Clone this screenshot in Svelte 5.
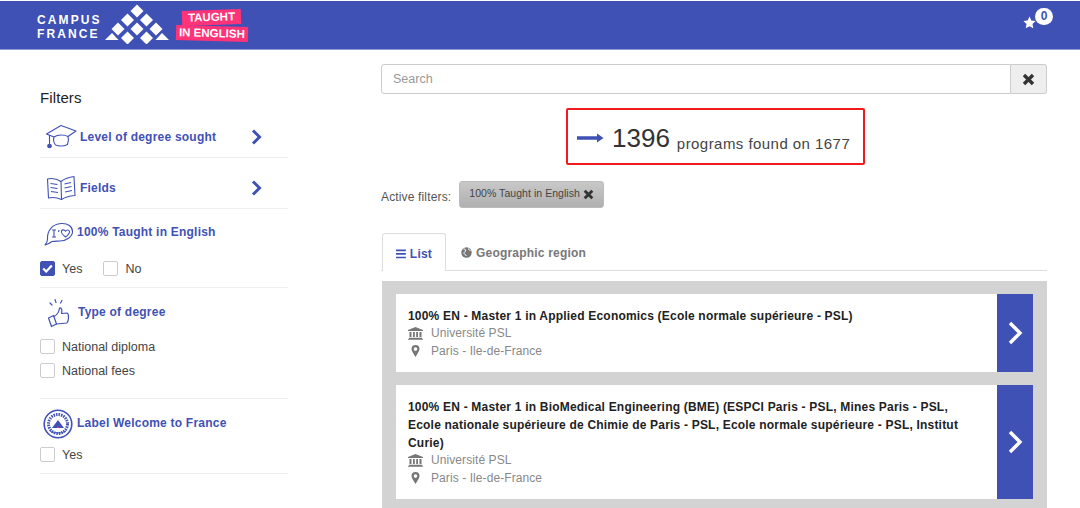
<script>
  const cards = [
    { title: '100% EN - Master 1 in Applied Economics (Ecole normale supérieure - PSL)', h: 'one' },
    { title: '100% EN - Master 1 in BioMedical Engineering (BME) (ESPCI Paris - PSL, Mines Paris - PSL, Ecole nationale supérieure de Chimie de Paris - PSL, Ecole normale supérieure - PSL, Institut Curie)', h: 'three' }
  ];
  const diamonds = [[32,7],[22.5,16],[41.5,16],[13,25],[32,25],[51,25],[22.5,34],[41.5,34]];
</script>

<div class="page">
  <header class="top">
    <div class="brand">
      <div class="wordmark"><span>CAMPUS</span><span>FRANCE</span></div>
      <svg class="pyramid" width="64" height="40" viewBox="0 0 64 40" fill="#fff">
        {#each diamonds as d}
          <path d="M{d[0]} {d[1]-6.500}l6.500 6.500-6.500 6.500-6.500-6.500z"/>
        {/each}
        <path d="M7 29l6.500 7H0z"/>
        <path d="M57 29l7 7H50.500z"/>
      </svg>
      <div class="taught">
        <span class="t1">TAUGHT</span>
        <span class="t2">IN ENGLISH</span>
      </div>
    </div>
    <div class="fav">
      <svg width="13" height="13" viewBox="0 0 24 24" fill="#fff"><path d="M12 1l3.400 7.300 7.900 1-5.800 5.500 1.500 7.900L12 18.800l-7 3.900 1.500-7.900L.7 9.300l7.900-1z"/></svg>
      <span class="count">0</span>
    </div>
  </header>

  <div class="content">
    <aside class="side">
      <h2>Filters</h2>

      <div class="row r1">
        <svg class="ic" width="32" height="26" viewBox="0 0 32 26" fill="none" stroke="#3f51b5" stroke-width="1.100" stroke-linejoin="round">
          <path d="M1.500 10L16 1.500 31 7 23 12.500C19 10.500 13 10.500 9 13z"/>
          <path d="M9 13c-1 3 0 6 1.500 8 4 1.500 9 1 12-.5 1-2.500 1.500-5 .5-8"/>
          <path d="M4.500 11v9"/>
          <circle cx="4.500" cy="22" r="1.800" fill="#3f51b5"/>
        </svg>
        <span class="lab l1">Level of degree sought</span>
        <svg class="chev" width="11" height="16" viewBox="0 0 11 16" fill="none" stroke="#3f51b5" stroke-width="3"><path d="M2 1.500L8.500 8 2 14.500"/></svg>
      </div>

      <div class="row r2">
        <svg class="ic" width="30" height="26" viewBox="0 0 30 26" fill="none" stroke="#3f51b5" stroke-width="1.100" stroke-linejoin="round">
          <path d="M1.500 4C6 3 11 4 15 6.500 19 3.500 24 2 28 1.500l1 19c-5 .5-10 1.500-13.500 4C11 22.500 6.500 22 2.500 23z"/>
          <path d="M15 6.500l.5 18"/>
          <path d="M4.500 8.500l7 1M4.500 12.500l7 1M5 16.500l7 1M18.500 9l6.500-1.500M18.500 13l7-1.500M19 17l7-1.500"/>
        </svg>
        <span class="lab l2">Fields</span>
        <svg class="chev" width="11" height="16" viewBox="0 0 11 16" fill="none" stroke="#3f51b5" stroke-width="3"><path d="M2 1.500L8.500 8 2 14.500"/></svg>
      </div>

      <div class="group g3">
        <div class="ghead">
          <svg class="ic3" width="30" height="24" viewBox="0 0 30 24" fill="none" stroke="#3f51b5" stroke-width="1.100" stroke-linejoin="round">
            <path d="M1 23c2-2 2.500-3.500 2.500-6C3 8 9 2 17 1.500c7-.5 11.500 3 11.500 8S23 18.500 16 19c-3 .2-5.500 0-8 .5-2 1.500-4 3-7 3.500z"/>
            <path d="M8 8h4M10 8v7M8 15h4M15 8l-.5 2"/>
            <path d="M21.500 15c-2-1.500-4.500-4-4-6 .5-1.500 3-1.500 4 .3 1-1.800 3.500-1.800 4 0 .3 2-2 4.200-4 5.700z"/>
          </svg>
          <span class="lab">100% Taught in English</span>
        </div>
        <div class="checks inline">
          <label class="chk"><span class="box on"><svg width="11" height="9" viewBox="0 0 11 9" fill="none" stroke="#fff" stroke-width="2.200"><path d="M1.200 4.500l3 3L9.800 1.500"/></svg></span>Yes</label>
          <label class="chk"><span class="box"></span>No</label>
        </div>
      </div>

      <div class="group g4">
        <div class="ghead">
          <svg class="ic4" width="24" height="30" viewBox="0 0 24 30" fill="none" stroke="#3f51b5" stroke-width="1.200" stroke-linejoin="round" stroke-linecap="round">
            <path d="M3 5l2 2M8 1.500l1 3M15 2.500l-1.500 2.500"/>
            <path d="M1.500 20l5-2.500 3 8.500-5 2.500z"/>
            <path d="M7 18.500c3-1.500 5-4 5.500-8.500 2-.5 3 2 2 5.500l5.500-.5c2 .5 2 7.500 0 10l-10.500 1"/>
          </svg>
          <span class="lab">Type of degree</span>
        </div>
        <div class="checks">
          <label class="chk"><span class="box"></span>National diploma</label>
          <label class="chk"><span class="box"></span>National fees</label>
        </div>
      </div>

      <div class="group g5">
        <div class="ghead">
          <svg class="ic5" width="30" height="30" viewBox="0 0 30 30" fill="none" stroke="#3f51b5">
            <circle cx="15" cy="15" r="13.800" stroke-width="1.600"/>
            <circle cx="15" cy="15" r="9.500" stroke-width="3" stroke-dasharray="1.500 1"/>
            <path d="M9 19l6-8 6 8z" fill="#3f51b5" stroke="none"/>
            <path d="M14 19l1-2 1 2z" fill="#ff3377" stroke="none"/>
            <path d="M7 22c4 2.500 12 2.500 16 0" stroke-width="1"/>
          </svg>
          <span class="lab">Label Welcome to France</span>
        </div>
        <div class="checks">
          <label class="chk"><span class="box"></span>Yes</label>
        </div>
      </div>
    </aside>

    <main class="main">
      <div class="search">
        <div class="input">Search</div>
        <div class="go"><svg width="13" height="13" viewBox="0 0 13 13" fill="none" stroke="#333" stroke-width="3.400"><path d="M2 2l9 9M11 2l-9 9"/></svg></div>
      </div>

      <div class="resultwrap">
        <div class="result">
          <svg width="27" height="12" viewBox="0 0 27 12" fill="#3f51b5"><path d="M0 4.300h20V1.500L26.500 6 20 10.500V7.700H0z"/></svg>
          <span class="big">1396</span>
          <span class="small">programs found on 1677</span>
        </div>
      </div>

      <div class="active">
        <span class="alab">Active filters:</span>
        <span class="chip"><span class="chiptxt">100% Taught in English</span>
          <svg width="11" height="11" viewBox="0 0 13 13" fill="none" stroke="#333" stroke-width="3.400"><path d="M2 2l9 9M11 2l-9 9"/></svg>
        </span>
      </div>

      <div class="tabs">
        <div class="tab on">
          <svg width="11" height="10" viewBox="0 0 11 10" fill="#3f51b5"><path d="M0 0h11v1.800H0zM0 4h11v1.800H0zM0 8h11v1.800H0z"/></svg>
          List
        </div>
        <div class="tab">
          <svg width="11" height="11" viewBox="0 0 11 11"><circle cx="5.500" cy="5.500" r="5.200" fill="#777"/><path d="M2.500 2c1.500 0 2.500.5 2 2S2.500 5 3 6.500 5.500 7 5 9M7.500 1.500c0 1.500.5 1.500 2 2" stroke="#fff" stroke-width="1" fill="none"/></svg>
          Geographic region
        </div>
      </div>

      <div class="list">
        {#each cards as c}
          <article class="card {c.h}">
            <div class="body">
              <div class="title">{c.title}</div>
              <div class="meta">
                <svg width="15" height="13" viewBox="0 0 15 13" fill="#777"><path d="M7.500 0L15 3v1H0V3zM1.500 5h2v5h-2zM5 5h1.800v5H5zM8.200 5H10v5H8.200zM11.500 5h2v5h-2zM.8 10.700h13.400V12H.8zM0 12.200h15V13H0z"/></svg>
                <span>Université PSL</span>
              </div>
              <div class="meta">
                <svg width="15" height="12" viewBox="0 0 15 12"><path fill="#777" fill-rule="evenodd" d="M7.500 0a4 4 0 0 1 4 4c0 2-2.500 5.500-4 8-1.500-2.500-4-6-4-8a4 4 0 0 1 4-4zm0 2.300a1.800 1.800 0 1 0 0 3.600 1.800 1.800 0 0 0 0-3.600z"/></svg>
                <span>Paris - Ile-de-France</span>
              </div>
            </div>
            <div class="arrow">
              <svg width="17" height="24" viewBox="0 0 17 24" fill="none" stroke="#fff" stroke-width="3.400"><path d="M3 2l10 10L3 22"/></svg>
            </div>
          </article>
        {/each}
      </div>
    </main>
  </div>
</div>

<style>
  :global(body) { margin: 0; background: #fff; }
  .page {
    width: 1080px; height: 508px; overflow: hidden;
    font-family: "Liberation Sans", Arial, sans-serif; color: #333;
  }
  .top {
    height: 48px; margin-top: 1px; background: #3f51b5;
    display: flex; justify-content: space-between; align-items: center;
    border-bottom: 1px solid #8d98d4;
    box-sizing: content-box;
  }
  .brand { display: flex; align-items: center; margin-left: 37px; }
  .wordmark {
    display: flex; flex-direction: column; color: #fff;
    font-weight: 700; font-size: 12px; line-height: 14px; letter-spacing: 2.100px;
    width: 68px; margin-top: 4px;
  }
  .pyramid { margin-top: -2px; }
  .taught {
    display: flex; flex-direction: column; align-items: flex-start;
    margin-left: 7px; color: #fff; font-weight: 700;
  }
  .t1 {
    background: #ff3377; font-size: 11.500px; line-height: 15px; padding: 0 6px;
    margin-left: 6px; transform: rotate(-2deg);
  }
  .t2 {
    background: #ff3377; font-size: 11.500px; line-height: 15px; padding: 0 3px;
    margin-top: 1px; transform: rotate(1.500deg);
  }
  .fav { display: flex; align-items: flex-start; margin-right: 27px; height: 26px; width: 30px; margin-top: -6px; }
  .fav svg { margin-top: 7px; flex: none; }
  .count {
    width: 19px; height: 17px; border-radius: 9px; background: #fff; color: #3f51b5;
    font-size: 12px; font-weight: 700; line-height: 17px; text-align: center; margin-left: -1px; margin-top: -1px;
  }
  .content { display: flex; padding-left: 40px; }
  .side { width: 248px; flex: none; font-size: 13px; }
  h2 { margin: 39px 0 0; font-size: 15px; line-height: 17px; font-weight: 400; color: #222; height: 18px; letter-spacing: .1px; }
  .row { display: flex; align-items: center; border-bottom: 1px solid #eee; padding-left: 5px; }
  .r1 { height: 40px; padding-top: 9px; margin-top: 1px; }
  .r2 { height: 40px; padding-top: 10px; }
  .ic { flex: none; width: 32px; margin-right: 3px; }
  .r2 .ic { margin-left: 1px; margin-right: 4px; width: 30px; }
  .lab { font-weight: 700; font-size: 12px; color: #3f51b5; letter-spacing: .22px; white-space: nowrap; }
  .chev { margin-left: auto; margin-right: 26px; }
  .group { border-bottom: 1px solid #eee; }
  .ghead { display: flex; align-items: center; }
  .g3 { height: 78px; }
  .g3 .ghead { height: 46px; padding-left: 4px; }
  .ic3 { margin-right: 3px; margin-top: 3px; }
  .g4 { height: 110px; }
  .g4 .ghead { height: 48px; padding-left: 7px; }
  .ic4 { margin-right: 7px; margin-top: 2px; }
  .g5 { height: 74px; }
  .g5 .ghead { height: 48px; padding-left: 3px; }
  .ic5 { margin-right: 4px; margin-top: 2px; }
  .checks { display: flex; flex-direction: column; gap: 9px; font-size: 12.500px; color: #444; }
  .checks.inline { flex-direction: row; gap: 21px; margin-top: 6px; }
  .g4 .checks { margin-top: 3px; }
  .g5 .checks { margin-top: 0; }
  .chk { display: flex; align-items: center; gap: 7px; height: 15px; }
  .box {
    width: 13px; height: 13px; border: 1px solid #ccc; border-radius: 2px; background: #fff;
    display: flex; align-items: center; justify-content: center;
  }
  .box.on { background: #3f51b5; border-color: #3f51b5; }

  .main { width: 666px; margin-left: 93px; flex: none; }
  .search { display: flex; height: 30px; margin-top: 14px; }
  .input {
    flex: 1; border: 1px solid #ccc; border-radius: 3px 0 0 3px; box-sizing: border-box;
    color: #999; font-size: 12.500px; line-height: 28px; padding-left: 11px;
  }
  .go {
    width: 36px; box-sizing: border-box; border: 1px solid #ccc; border-left: 0; border-radius: 0 3px 3px 0;
    background: #eee; display: flex; align-items: center; justify-content: center;
  }
  .resultwrap { display: flex; padding-left: 185px; margin-top: 14px; }
  .result {
    width: 299px; height: 57px; box-sizing: border-box; border: 2px solid #f21b1b; border-radius: 2px;
    display: flex; align-items: center; padding: 3px 0 0 9px;
  }
  .big { font-size: 26px; margin-left: 8px; color: #333; }
  .small { font-size: 15px; margin-left: 7px; margin-top: 10px; color: #444; letter-spacing: .45px; white-space: nowrap; }
  .active { display: flex; align-items: center; margin-top: 16px; height: 27px; }
  .alab { font-size: 12px; color: #555; margin-top: 5px; letter-spacing: .15px; }
  .chip {
    margin-left: 8px; width: 145px; height: 27px; box-sizing: border-box;
    background: linear-gradient(#c8c8c8, #b0b0b0); border: 1px solid #bbb; border-radius: 3px;
    font-size: 10.500px; color: #444; display: flex; align-items: center; gap: 3px; padding-left: 9px; white-space: nowrap;
  }
  .chiptxt { margin-top: -3px; letter-spacing: .05px; }
  .chip svg { margin-top: -1px; }
  .tabs { display: flex; margin-top: 25px; height: 37px; border-bottom: 1px solid #ddd; font-size: 12px; font-weight: 700; color: #777; letter-spacing: .2px; }
  .tab { display: flex; align-items: center; gap: 4px; padding: 2px 15px 0; height: 37px; box-sizing: border-box; }
  .tab:first-child { margin-left: 1px; padding: 2px 13px 0; }
  .tab.on {
    color: #3f51b5; background: #fff; border: 1px solid #ddd; border-bottom: 0;
    border-radius: 3px 3px 0 0; height: 38px; width: 64px;
  }
  .list {
    margin: 10px 0 0 1px; background: #d3d3d3; padding: 13px 14px; display: flex; flex-direction: column; gap: 13px; height: 300px;
  }
  .card { display: flex; background: #fff; flex: none; }
  .one { height: 78px; }
  .three { height: 114px; }
  .body { flex: 1; padding: 13px 34px 0 13px; margin-left: -1px; }
  .title { font-size: 12px; line-height: 18px; font-weight: 700; color: #222; letter-spacing: .2px; margin-bottom: -1px; }
  .meta { display: flex; align-items: center; gap: 8px; height: 18px; font-size: 12px; color: #888; letter-spacing: .08px; }
  .meta svg { flex: none; }
  .arrow { width: 36px; flex: none; background: #3f51b5; display: flex; align-items: center; justify-content: center; }
</style>
